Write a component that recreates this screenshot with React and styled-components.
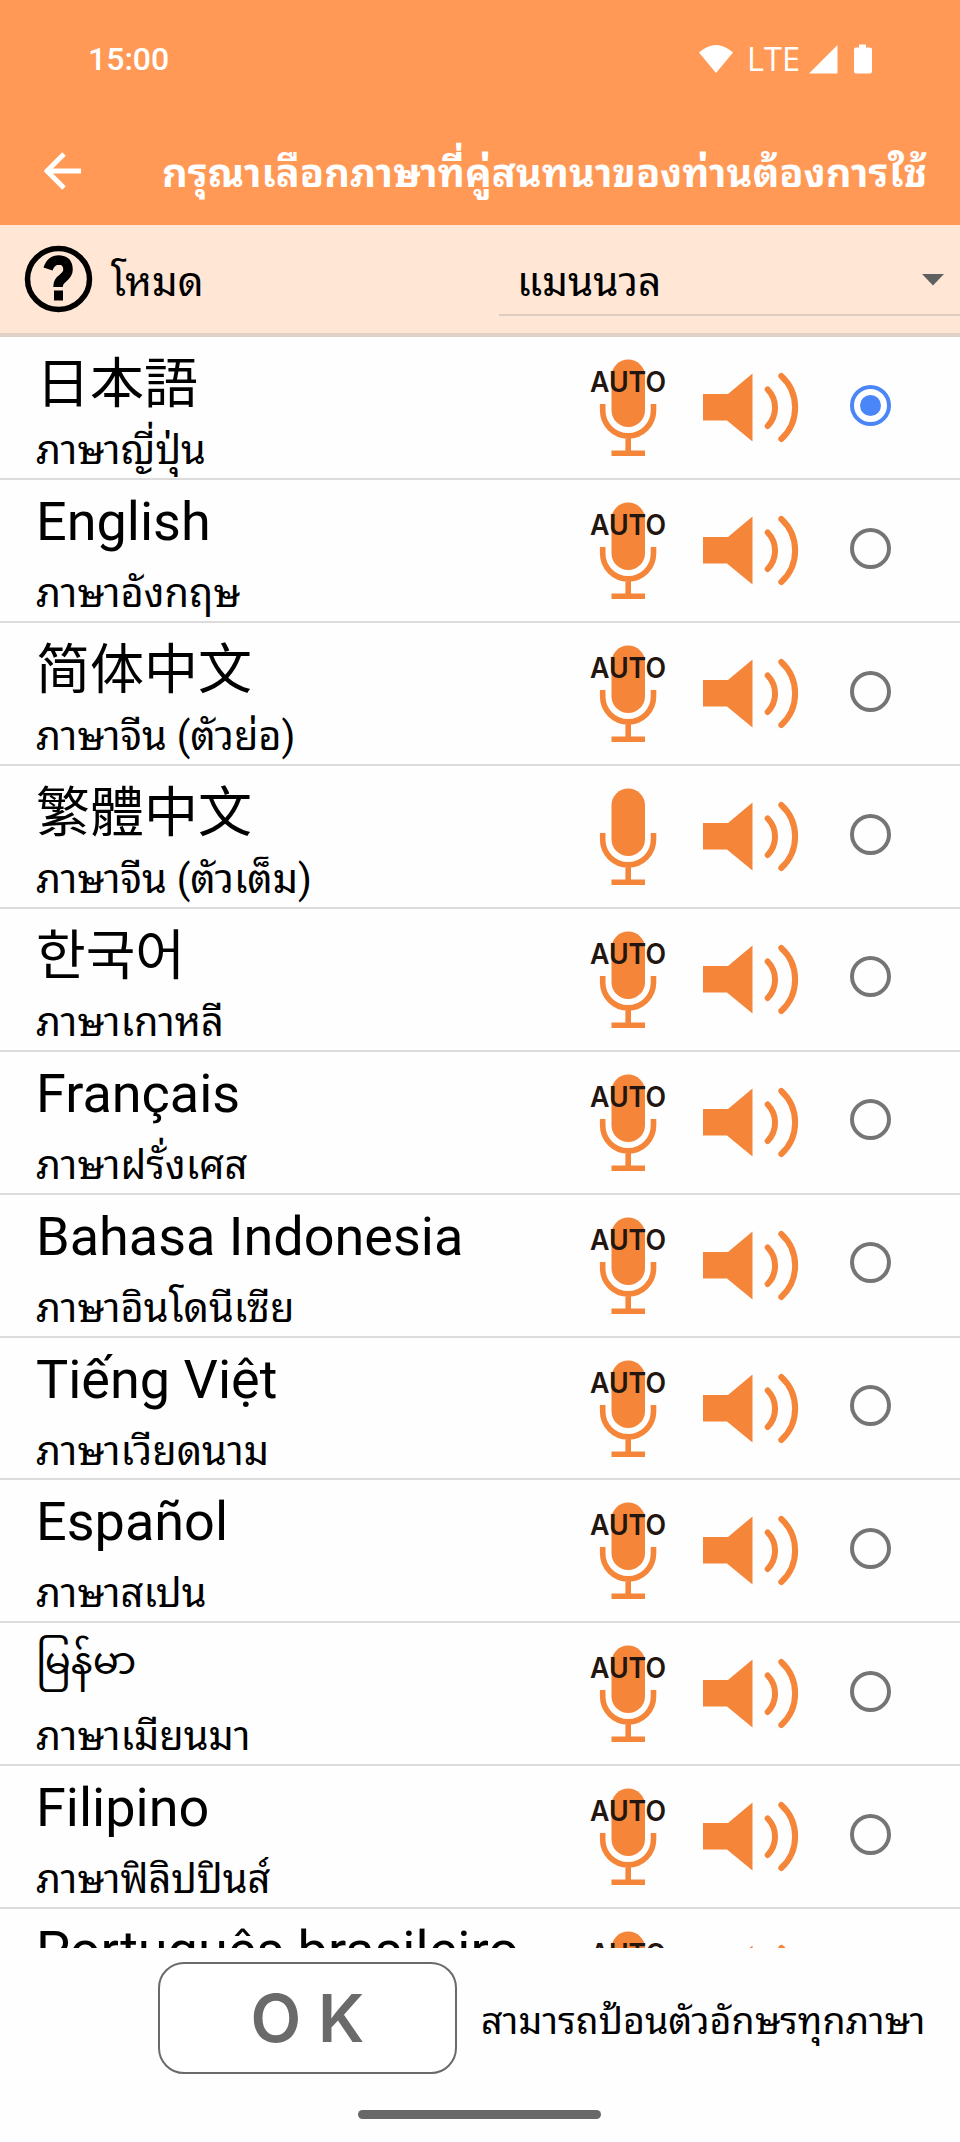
import React, { useState } from 'react';
import styled, { createGlobalStyle } from 'styled-components';

const GlobalStyle = createGlobalStyle`
  * {
    box-sizing: border-box;
  }
  body {
    margin: 0;
    background: #fefefe;
    color: #000;
    font-family: Roboto, 'Noto Sans Thai Looped', 'Noto Looped Thai', 'Noto Sans Thai UI', Loma, Garuda, 'Noto Sans Thai', 'Noto Sans', sans-serif;
  }
`;

const Screen = styled.div`
  width: 960px;
  height: 2142px;
  display: flex;
  flex-direction: column;
  overflow: hidden;
`;

const StatusBar = styled.div`
  height: 117px;
  flex: none;
  padding: 0 88px;
  display: flex;
  align-items: center;
  background: #ff9955;
  color: #fff;
`;

const Clock = styled.span`
  flex: 1;
  font-family: Roboto, sans-serif;
  font-size: 32px;
  font-weight: 500;
`;

const StatusIcons = styled.div`
  display: flex;
  align-items: center;
  svg {
    display: block;
  }
`;

const Network = styled.span`
  margin: 0 9px 0 13px;
  font-family: 'Open Sans', sans-serif;
  font-size: 32.5px;
  font-weight: 500;
  line-height: 32px;
`;

const Header = styled.header`
  height: 108px;
  flex: none;
  display: flex;
  align-items: center;
  padding-left: 44px;
  background: #ff9955;
  color: #fff;
`;

const Title = styled.h1`
  margin: 6px 0 0 80px;
  font-size: 39.7px;
  font-weight: 700;
  line-height: 50px;
  white-space: nowrap;
`;

const ModeBar = styled.div`
  height: 112px;
  flex: none;
  display: flex;
  align-items: flex-start;
  background: #ffe6d5;
  border-bottom: 4px solid #e0d0c7;
  padding-left: 24px;
`;

const HelpIcon = styled.svg`
  display: block;
  margin-top: 20px;
`;

const ModeLabel = styled.span`
  width: 388px;
  margin-left: 17px;
  font-size: 40.5px;
  line-height: 50px;
  padding-top: 32px;
`;

const Select = styled.div`
  flex: 1;
  height: 91px;
  display: flex;
  justify-content: space-between;
  align-items: flex-start;
  padding: 32px 16px 0 18px;
  border-bottom: 2px solid #dfccc0;
  font-size: 40.5px;
  line-height: 50px;
  svg {
    margin-top: 17px;
  }
`;

const List = styled.ul`
  height: 1611px;
  flex: none;
  margin: 0;
  padding: 0.4px 0 0;
  overflow: hidden;
  list-style: none;
`;

const Row = styled.li`
  height: 142.89px;
  display: flex;
  border-bottom: 2px solid #dcdcdc;
`;

const Names = styled.div`
  width: 587px;
  padding-left: 36px;
`;

const Native = styled.div`
  height: 89px;
  font-family: Roboto, ${(props) => props.$font || "'Noto Sans'"}, sans-serif;
  font-size: ${(props) => props.$size || 54}px;
  line-height: ${(props) => props.$line || 84}px;
  white-space: nowrap;
`;

const Translated = styled.div`
  font-size: 39.8px;
  line-height: 50px;
  white-space: nowrap;
`;

const MicIcon = styled.svg`
  flex: none;
  margin: 20px 0 0 0;
  overflow: visible;
`;

const SpeakerIcon = styled.svg`
  flex: none;
  margin: 34px 0 0 34px;
`;

const Radio = styled.button`
  flex: none;
  width: 41px;
  height: 41px;
  margin: 47.5px 0 0 50.5px;
  padding: 0;
  display: grid;
  place-items: center;
  border: 4px solid ${(props) => (props.$checked ? '#4a86f7' : '#757575')};
  border-radius: 50%;
  background: none;
  &::after {
    content: '';
    width: 21px;
    height: 21px;
    border-radius: 50%;
    background: ${(props) => (props.$checked ? '#4a86f7' : 'none')};
  }
`;

const Footer = styled.footer`
  height: 126px;
  flex: none;
  display: flex;
  align-items: flex-start;
  padding: 14px 0 0 158px;
`;

const OkButton = styled.button`
  width: 299px;
  height: 112px;
  padding: 0;
  border: 2px solid #6a6a6a;
  border-radius: 26px;
  background: #fff;
  color: #6a6a6a;
  font-family: Inter, sans-serif;
  font-size: 66px;
  font-weight: 600;
`;

const Note = styled.p`
  margin: 34px 0 0 24px;
  font-size: 37.6px;
  line-height: 50px;
  white-space: nowrap;
`;

const HomeBar = styled.div`
  width: 243px;
  height: 9px;
  margin: 36px auto 0 358px;
  border-radius: 5px;
  background: #686868;
`;

const languages = [
  { native: '日本語', thai: 'ภาษาญี่ปุ่น', font: "'Noto Sans CJK JP'", line: 96 },
  { native: 'English', thai: 'ภาษาอังกฤษ' },
  { native: '简体中文', thai: 'ภาษาจีน (ตัวย่อ)', font: "'Noto Sans CJK SC'", line: 96 },
  {
    native: '繁體中文',
    thai: 'ภาษาจีน (ตัวเต็ม)',
    font: "'Noto Sans CJK TC'",
    line: 96,
    manual: true,
  },
  { native: '한국어', thai: 'ภาษาเกาหลี', font: "'Noto Sans CJK KR'", line: 96 },
  { native: 'Français', thai: 'ภาษาฝรั่งเศส' },
  { native: 'Bahasa Indonesia', thai: 'ภาษาอินโดนีเซีย' },
  { native: 'Tiếng Việt', thai: 'ภาษาเวียดนาม' },
  { native: 'Español', thai: 'ภาษาสเปน' },
  { native: 'မြန်မာ', thai: 'ภาษาเมียนมา', font: "'Noto Sans Myanmar'", size: 38.5, line: 76 },
  { native: 'Filipino', thai: 'ภาษาฟิลิปปินส์' },
  { native: 'Português brasileiro', thai: '' },
];

const Mic = ({ auto }) => (
  <MicIcon width="82" height="102" viewBox="0 0 82 102">
    <rect x="24.5" y="2.5" width="33.5" height="67.5" rx="16.7" fill="#f58539" />
    <path
      d="M15.7 47v6.5a25.4 25.4 0 0 0 50.8 0V47M41.2 79v17M24.5 96.2h33.5"
      fill="none"
      stroke="#f58539"
      strokeWidth="5.6"
    />
    {auto && (
      <text
        x="3"
        y="34.5"
        textLength="76"
        lengthAdjust="spacingAndGlyphs"
        fontFamily="Inter, sans-serif"
        fontSize="28.5"
        fontWeight="600"
        fill="#231510"
      >
        AUTO
      </text>
    )}
  </MicIcon>
);

const Speaker = () => (
  <SpeakerIcon width="96" height="72" viewBox="0 0 96 72">
    <path d="M0 23h25l24.5-20.5v68L24 49.5H0z" fill="#f58539" />
    <path
      d="M64.7 18.5a26.3 26.3 0 0 1 0 36.5M78.3 5a42.8 42.8 0 0 1 0 63"
      fill="none"
      stroke="#f58539"
      strokeWidth="6"
      strokeLinecap="round"
    />
  </SpeakerIcon>
);

export default () => {
  const [selected, setSelected] = useState(0);

  return (
    <>
      <GlobalStyle />
      <Screen>
        <StatusBar>
          <Clock>15:00</Clock>
          <StatusIcons>
            <svg width="36" height="30" viewBox="0 0 36 30">
              <path d="M1 8.5Q18-6.5 35 8.5L18 29z" fill="#fff" />
            </svg>
            <Network>LTE</Network>
            <svg width="63" height="30" viewBox="0 0 63 30">
              <path d="M0 29.5 28.5 1v28.5z" fill="#fff" />
              <path
                d="M50 .5h7v3h4q2 0 2 2v22q0 2-2 2H47q-2 0-2-2v-22q0-2 2-2h3z"
                fill="#fff"
              />
            </svg>
          </StatusIcons>
        </StatusBar>
        <Header>
          <svg width="38" height="38" viewBox="0 0 38 38">
            <path d="M37 19H4M20 2 3 19l17 17" fill="none" stroke="#fff" strokeWidth="5" />
          </svg>
          <Title>กรุณาเลือกภาษาที่คู่สนทนาของท่านต้องการใช้</Title>
        </Header>
        <ModeBar>
          <HelpIcon width="70" height="68" viewBox="0 0 70 68">
            <ellipse cx="34.5" cy="34" rx="31" ry="30.5" fill="none" stroke="#000" strokeWidth="5.5" />
            <path
              d="M24 24q3-9 11-9 9 .5 9 10 0 4-5.5 8.5-4.5 3-4.5 8.5"
              fill="none"
              stroke="#000"
              strokeWidth="9.5"
            />
            <path d="M30 45.5h9v10h-9z" />
          </HelpIcon>
          <ModeLabel>โหมด</ModeLabel>
          <Select>
            แมนนวล
            <svg width="22" height="12" viewBox="0 0 22 12">
              <path d="M0 0h22L11 11.5z" fill="#606060" />
            </svg>
          </Select>
        </ModeBar>
        <List>
          {languages.map(({ native, thai, font, size, line, manual }, index) => (
            <Row key={native}>
              <Names>
                <Native $font={font} $size={size} $line={line}>
                  {native}
                </Native>
                <Translated>{thai}</Translated>
              </Names>
              <Mic auto={!manual} />
              <Speaker />
              <Radio $checked={index === selected} onClick={() => setSelected(index)} />
            </Row>
          ))}
        </List>
        <Footer>
          <OkButton>O K</OkButton>
          <Note>สามารถป้อนตัวอักษรทุกภาษา</Note>
        </Footer>
        <HomeBar />
      </Screen>
    </>
  );
};
